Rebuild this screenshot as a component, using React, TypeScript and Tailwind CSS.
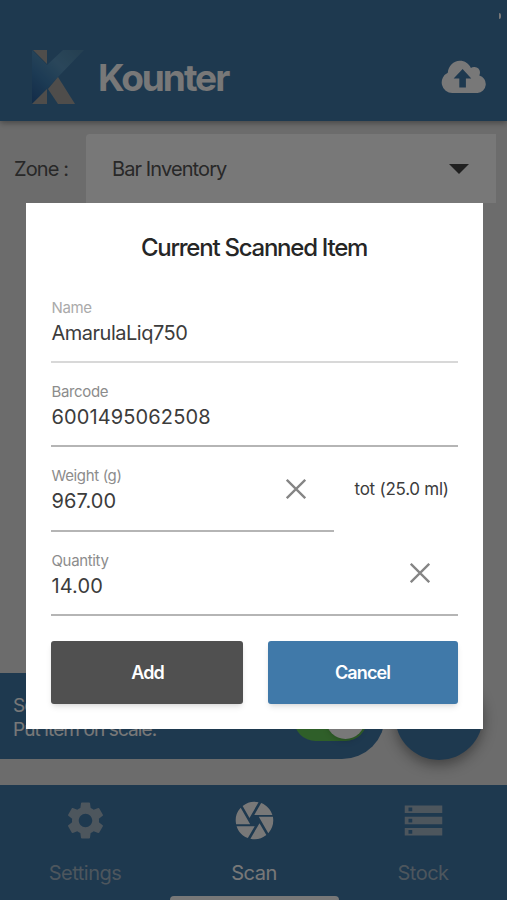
import { ReactNode } from "react";
import clsx from "clsx";
import { MdCamera, MdSettings, MdStorage } from "react-icons/md";

interface FieldProps {
  label: string;
  value: string;
  disabled?: boolean;
  clearable?: boolean;
  className?: string;
  valueClassName?: string;
}

interface TabProps {
  label: string;
  icon: ReactNode;
  active?: boolean;
}

const KounterLogo = () => (
  <svg width="52" height="54" viewBox="0 0 52 54">
    <defs>
      <linearGradient
        id="arm"
        gradientUnits="userSpaceOnUse"
        x1="46"
        y1="0"
        x2="0"
        y2="50"
      >
        <stop offset="0" stopColor="#5088ae" />
        <stop offset="0.35" stopColor="#5a96c0" />
        <stop offset="0.65" stopColor="#3f7fb4" />
        <stop offset="1" stopColor="#2a609c" />
      </linearGradient>
    </defs>
    <path d="M0 0 15 15 31 0H52L0 54Z" fill="url(#arm)" />
    <path d="M1 0H15V14Z" fill="#a8a59f" />
    <path d="M15 39V54H0Z" fill="#a8a59f" />
    <path d="M26 27 43 54H26L16 39Z" fill="#a8a59f" />
  </svg>
);

const CloudUpload = () => (
  <svg width="46" height="34" viewBox="0 0 46 34" fill="#fff">
    <path
      fillRule="evenodd"
      d="M11.3 33A10.6 10.6 0 0 1 6.8 12.8C7.4 6 12.5.8 18.8.8c5 0 9 2.7 11.1 7.1 1-.7 2.3-1 3.6-.9 3.2.2 5.5 2.3 5.5 5.4 0 1.2-.3 2-.7 3A9 9 0 0 1 36.5 33ZM18.3 27.5h6.6v-9h5.4L21.6 9l-9 9.5h5.7Z"
    />
  </svg>
);

const ClearIcon = () => (
  <svg width="20" height="20" viewBox="0 0 20 20" stroke="#858585" strokeWidth="2.3">
    <path d="M.8.8 19.2 19.2M19.2.8.8 19.2" />
  </svg>
);

const Field = ({
  label,
  value,
  disabled,
  clearable,
  className,
  valueClassName = "tracking-[0.12px]",
}: FieldProps) => (
  <div
    className={clsx(
      "flex h-[84.2px] items-start justify-between border-b-2",
      disabled ? "border-[#d8d8d8]" : "border-[#b5b5b5]",
      className
    )}
  >
    <div className="pt-[19px] pl-px">
      <div
        className={clsx(
          "text-[15px] leading-5 tracking-[-0.35px]",
          disabled ? "text-[#aaaaaa]" : "text-[#8c8c8c]"
        )}
      >
        {label}
      </div>
      <div
        className={clsx(
          "mt-0.5 text-[20px] leading-[26px] text-[#3c3c3c]",
          valueClassName
        )}
      >
        {value}
      </div>
    </div>
    {clearable && (
      <button className="mt-[31.5px] mr-7">
        <ClearIcon />
      </button>
    )}
  </div>
);

const Tab = ({ label, icon, active }: TabProps) => (
  <div
    className={clsx(
      "flex flex-1 flex-col items-center pt-[13px] pl-px",
      active ? "text-white" : "text-[#a3b6c6]"
    )}
  >
    {icon}
    <span className="mt-[17px] text-[20px] leading-[26px] tracking-[-0.5px]">{label}</span>
  </div>
);

const ScannedItemModal = () => (
  <div className="absolute inset-0 flex flex-col items-center bg-black/53 pt-[203px] pl-px">
    <div className="h-[526px] w-[457px] bg-white px-[25px]">
      <h2 className="pt-[29px] text-center text-[24px] leading-8 font-medium tracking-[-1.25px] text-[#262626]">
        Current Scanned Item
      </h2>
      <div className="mt-[15px]">
        <Field
          label="Name"
          value="AmarulaLiq750"
          valueClassName="tracking-[-0.5px]"
          disabled
        />
        <Field label="Barcode" value="6001495062508" />
        <div className="flex">
          <Field label="Weight (g)" value="967.00" clearable className="w-[283px]" />
          <span className="mt-[30px] ml-[21px] text-[17px] leading-6 tracking-[-0.25px] text-[#3c3c3c]">
            tot (25.0 ml)
          </span>
        </div>
        <Field label="Quantity" value="14.00" clearable />
      </div>
      <div className="mt-[25px] flex gap-[25px]">
        <button className="h-[63px] flex-1 rounded-[3px] bg-[#505050] pl-0.5 text-[18px] font-semibold tracking-[-0.9px] text-white shadow-md">
          Add
        </button>
        <button className="h-[63px] flex-1 rounded-[3px] bg-[#4079a9] text-[18px] font-semibold tracking-[-0.9px] text-white shadow-md">
          Cancel
        </button>
      </div>
    </div>
  </div>
);

export default function App() {
  return (
    <div className="relative flex h-[900px] w-[507px] flex-col overflow-hidden bg-[#e5e5e5] font-['Inter',sans-serif]">
      <header className="flex h-[121px] shrink-0 items-end bg-[#4079a9] pr-5 pb-[17px] pl-8 shadow-[0_2px_6px_rgba(0,0,0,0.35)]">
        <KounterLogo />
        <h1 className="ml-[14px] flex-1 pb-0.5 text-[37px] leading-[48px] font-bold tracking-[-2px] text-white">
          Kounter
        </h1>
        <div className="pb-[10px]">
          <CloudUpload />
        </div>
        <span className="absolute top-[13px] right-[6px] h-[6px] w-[2px] rounded-r bg-white" />
      </header>

      <div className="mt-[12.5px] mr-[11px] flex h-[69px] shrink-0 items-center text-[20px] tracking-[-0.9px] text-[#555]">
        <span className="w-[86px] pt-0.5 pl-[14px]">Zone :</span>
        <div className="flex h-full flex-1 items-center justify-between rounded-tl bg-white pt-0.5 pr-[27px] pl-[26px]">
          <span>Bar Inventory</span>
          <svg width="20" height="10" viewBox="0 0 20 10" fill="#444">
            <path d="M0 0H20L10 10Z" />
          </svg>
        </div>
      </div>

      <div className="mt-auto mb-[25px] flex items-center gap-[10px]">
        <div className="flex h-[86px] w-[385px] items-center justify-between rounded-r-full bg-[#4079a9] pr-[18px] pl-[13px] text-[19px] leading-6 tracking-[-0.9px] text-white">
          <div className="pt-[3px]">
            Scale
            <br />
            Put item on scale.
          </div>
          <div className="mt-[7px] flex h-[43px] w-[73px] items-center justify-end rounded-full bg-[#65c957] pr-0.5">
            <div className="size-[39px] rounded-full bg-white shadow-md" />
          </div>
        </div>
        <div className="size-[88px] rounded-full bg-[#4079a9] shadow-[0_5px_14px_rgba(0,0,0,0.4)]" />
      </div>

      <nav className="flex h-[115px] shrink-0 bg-[#4079a9]">
        <Tab label="Settings" icon={<MdSettings size={45} />} />
        <Tab label="Scan" icon={<MdCamera size={45} />} active />
        <Tab label="Stock" icon={<MdStorage size={45} />} />
      </nav>
      <div className="absolute bottom-0 left-[170px] h-1 w-[169px] rounded-t-sm bg-white" />

      <ScannedItemModal />
    </div>
  );
}
